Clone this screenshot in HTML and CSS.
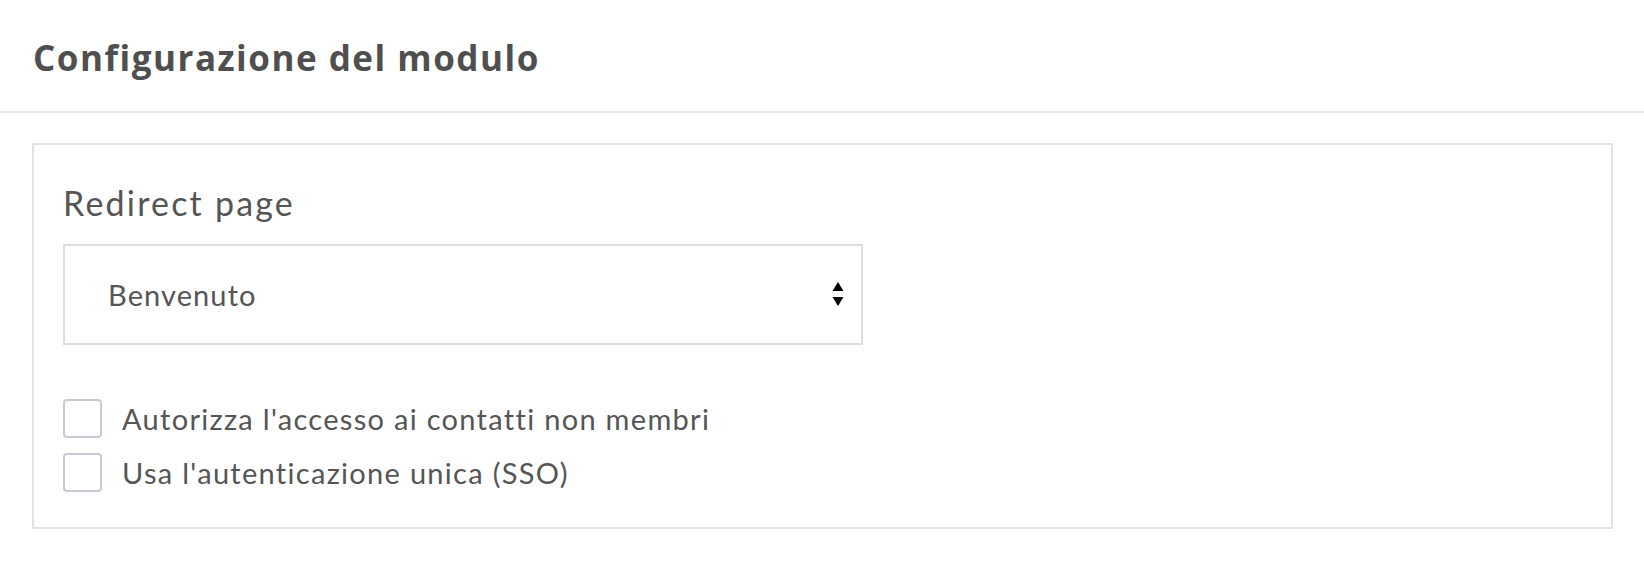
FILE: index.html
```html
<!DOCTYPE html>
<html lang="it">
<head>
<meta charset="utf-8">
<title>Configurazione del modulo</title>
<link rel="stylesheet" href="styles.css">
</head>
<body>
<header class="page-header">
  <h1 class="page-title">Configurazione del modulo</h1>
</header>
<main class="card">
  <div class="field">
    <label class="field-label">Redirect page</label>
    <div class="select">
      <span class="select-value">Benvenuto</span>
      <svg class="select-arrows" width="12" height="26" viewBox="0 0 12 26" aria-hidden="true">
        <polygon points="6,0 11.5,9 0.5,9" fill="#000"/>
        <polygon points="0.5,15 11.5,15 6,24" fill="#000"/>
      </svg>
    </div>
  </div>
  <div class="checks">
    <div class="check-row"><span class="checkbox"></span><span class="check-label">Autorizza l'accesso ai contatti non membri</span></div>
    <div class="check-row"><span class="checkbox"></span><span class="check-label">Usa l'autenticazione unica (SSO)</span></div>
  </div>
</main>
</body>
</html>
```
FILE: styles.css
```css
html, body {
  margin: 0;
  padding: 0;
  background: #fff;
}
body {
  font-family: Lato, "Noto Sans", sans-serif;
  color: #555;
}
.page-header {
  height: 111px;
  border-bottom: 2px solid #e6e6e6;
  display: flex;
  align-items: center;
  padding: 0 33px;
}
.page-title {
  margin: 0;
  font-family: "Open Sans", Lato, sans-serif;
  font-size: 35px;
  font-weight: 700;
  letter-spacing: 1.5px;
  color: #4f4f4f;
  line-height: 1;
  padding-top: 4px;
}
.card {
  margin: 30px 31px 0 32px;
  border: 2px solid #e3e3e3;
  padding: 38px 29px 35px 29px;
}
.field-label {
  display: block;
  font-size: 34px;
  line-height: 40px;
  letter-spacing: 2.2px;
  color: #555;
}
.select {
  position: relative;
  margin-top: 21px;
  width: 800px;
  height: 101px;
  border: 2px solid #dcdee4;
  display: flex;
  align-items: center;
  padding-left: 43px;
  box-sizing: border-box;
}
.select-value {
  font-size: 29px;
  letter-spacing: 1.1px;
  color: #555;
}
.select-arrows {
  position: absolute;
  right: 17px;
  top: 36px;
}
.checks {
  margin-top: 54px;
  display: flex;
  flex-direction: column;
  gap: 15px;
}
.check-row {
  display: flex;
  align-items: center;
  gap: 20px;
}
.checkbox {
  width: 39px;
  height: 39px;
  box-sizing: border-box;
  border: 2px solid #c6cad4;
  border-radius: 4px;
  flex: none;
}
.check-label {
  font-size: 29px;
  letter-spacing: 1.3px;
  color: #555;
}
```
